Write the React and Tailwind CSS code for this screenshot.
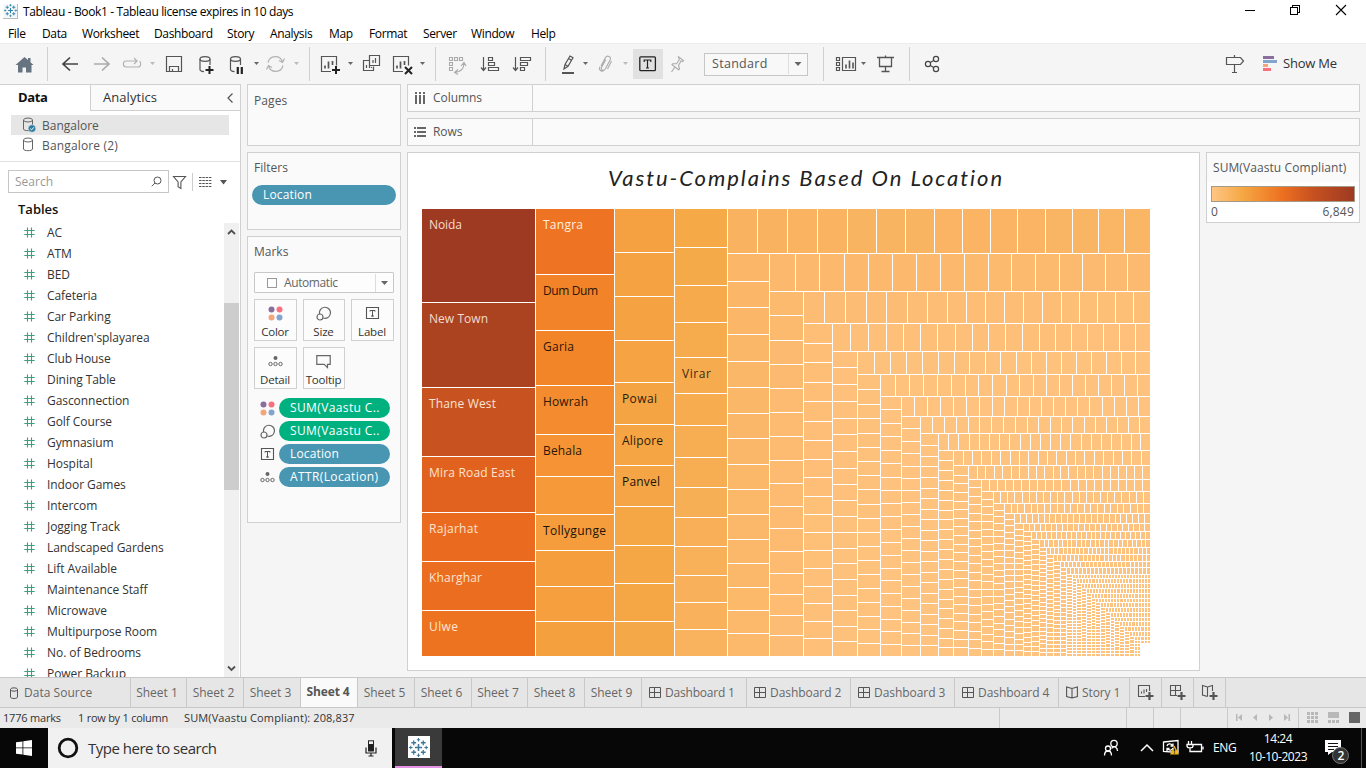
import React from "react";

/* ------------------------------------------------------------------ */
/* Treemap                                                             */
/* ------------------------------------------------------------------ */

const RIGHT = 1150;
const BOTTOM = 656;

// Strips are peeled off the remaining area in turn: "c" from the left edge, "r" from the top edge.
const STRIPS = [
  ["c", 535, [302, 387, 456, 512, 561, 610], ["#9e3a22", "#ab4321", "#c85320", "#e1621f", "#ea6b20", "#eb6d20", "#ee7321"]],
  ["c", 614, [274, 330, 385, 434, 476, 514, 550, 586, 621], ["#ee7423", "#f28328", "#f38529", "#f48b2f", "#f69435", "#f69939", "#f59d3c", "#f59e3d", "#f59f3e", "#f5a03e"]],
  ["c", 674, [252, 296, 340, 382, 424, 465, 506, 545, 583, 621], ["#f5a141", "#f5a847"]],
  ["c", 727, [247, 285, 322, 357, 393, 425, 457, 487, 517, 546, 575, 602, 629], ["#f5a947", "#f9b25e"]],
  ["r", 253, [757, 787, 817, 847, 876, 905, 934, 962, 990, 1017, 1045, 1072, 1098, 1124], ["#f9b360", "#fab565"]],
  ["c", 769, [281, 307, 334, 361, 387, 413, 438, 464, 489, 514, 539, 563, 587, 610, 633], ["#fbb667", "#fcb96b"]],
  ["r", 291, [795, 819, 844, 868, 892, 916, 940, 964, 988, 1011, 1035, 1059, 1082, 1105, 1127], ["#fcb96d", "#fcba70"]],
  ["c", 803, [315, 340, 364, 388, 412, 436, 460, 483, 506, 528, 551, 573, 594, 615, 635], ["#fcba6f", "#fdbc73"]],
  ["r", 323, [824, 845, 866, 886, 907, 927, 947, 966, 985, 1004, 1023, 1042, 1061, 1079, 1097, 1115, 1133], ["#fdbc73", "#fdbe76"]],
  ["c", 832, [343, 362, 382, 401, 421, 440, 459, 477, 496, 514, 532, 550, 568, 586, 603, 621, 638], ["#febe76", "#febf78"]],
  ["r", 351, [850, 868, 886, 903, 920, 937, 955, 972, 988, 1005, 1022, 1039, 1055, 1071, 1087, 1103, 1119, 1135], ["#febf78", "#fec07a"]],
  ["c", 857, [367, 384, 401, 418, 434, 451, 468, 484, 500, 516, 532, 548, 563, 579, 595, 610, 626, 641], ["#fec07a", "#fec17b"]],
  ["r", 374, [874, 890, 906, 922, 938, 954, 969, 985, 1000, 1016, 1031, 1046, 1061, 1076, 1091, 1106, 1121, 1135], ["#fec17b", "#fec27c"]],
  ["c", 880, [389, 404, 418, 433, 447, 461, 475, 489, 504, 518, 532, 546, 560, 574, 588, 602, 616, 629, 643], ["#fec17c", "#fec27d"]],
  ["r", 396, [895, 909, 923, 937, 951, 965, 978, 992, 1006, 1019, 1033, 1046, 1059, 1072, 1085, 1098, 1111, 1124, 1137], ["#ffc27d", "#ffc27e"]],
  ["c", 901, [409, 423, 436, 450, 463, 477, 490, 503, 516, 529, 542, 555, 568, 580, 593, 606, 619, 631, 644], ["#ffc27e", "#ffc37f"]],
  ["r", 416, [914, 927, 940, 953, 966, 979, 992, 1004, 1017, 1029, 1041, 1053, 1065, 1077, 1089, 1102, 1114, 1126, 1138], ["#ffc37f", "#ffc37f"]],
  ["c", 920, [428, 441, 453, 466, 478, 490, 502, 514, 526, 538, 550, 562, 574, 586, 598, 610, 622, 633, 645], ["#ffc37f", "#ffc380"]],
  ["r", 433, [932, 944, 956, 968, 979, 991, 1003, 1015, 1027, 1038, 1050, 1061, 1072, 1084, 1095, 1106, 1117, 1128, 1139]],
  ["c", 938, [445, 456, 466, 477, 488, 498, 509, 519, 530, 540, 551, 561, 572, 582, 593, 603, 614, 624, 635, 645]],
  ["r", 450, [948, 958, 969, 979, 989, 999, 1009, 1020, 1030, 1040, 1050, 1060, 1070, 1081, 1091, 1101, 1111, 1121, 1131, 1140]],
  ["c", 953, [460, 470, 480, 490, 500, 510, 519, 529, 539, 549, 559, 569, 579, 589, 599, 608, 618, 628, 638, 647]],
  ["r", 465, [963, 972, 981, 991, 1000, 1010, 1019, 1028, 1038, 1047, 1056, 1066, 1075, 1084, 1094, 1103, 1113, 1122, 1131, 1141]],
  ["c", 968, [475, 483, 492, 501, 509, 518, 526, 535, 544, 552, 561, 570, 578, 587, 596, 604, 613, 621, 630, 639, 647]],
  ["r", 479, [977, 985, 994, 1002, 1011, 1019, 1028, 1036, 1044, 1053, 1060, 1068, 1077, 1085, 1093, 1102, 1110, 1118, 1126, 1134, 1142]],
  ["c", 981, 8.5], ["r", 491, 8.1], ["c", 993, 7.5], ["r", 503, 7.2],
  ["c", 1004, 6.6], ["r", 513, 6.7], ["c", 1014, 6.1], ["r", 523, 6],
  ["c", 1023, 5.7], ["r", 531, 5.4], ["c", 1031, 4.7], ["r", 539, 4.9],
  ["c", 1039, 5], ["r", 547, 4.6], ["c", 1046, 4.1], ["r", 554, 4.1],
  ["c", 1053, 4], ["r", 561, 4.1], ["c", 1060, 4], ["r", 567, 4],
  ["c", 1066, 4], ["r", 574, 4], ["c", 1072, 3], ["r", 578, 3],
  ["c", 1076, 3], ["r", 583, 3], ["c", 1081, 3], ["r", 588, 3],
  ["c", 1086, 3], ["r", 593, 3], ["c", 1091, 3], ["r", 598, 3],
  ["c", 1095, 3], ["r", 602, 3], ["c", 1100, 3], ["r", 607, 3],
  ["c", 1105, 3], ["r", 612, 3], ["c", 1110, 3], ["r", 617, 3],
  ["c", 1114, 3], ["r", 621, 3], ["c", 1119, 3], ["r", 626, 3],
  ["c", 1124, 3], ["r", 631, 3], ["c", 1129, 3], ["r", 636, 3],
  ["c", 1134, 3], ["r", 640, 3], ["c", 1137, 3], ["r", 643, 3],
  ["c", 1140, 3],
];

const channel = (hex, i) => parseInt(hex.slice(1 + i * 2, 3 + i * 2), 16);
function mix(a, b, t) {
  const v = [0, 1, 2].map((i) => Math.round(channel(a, i) + (channel(b, i) - channel(a, i)) * t));
  return `rgb(${v.join(",")})`;
}

function buildCells() {
  const cells = [];
  let x = 422;
  let y = 209;
  for (const [axis, end, spec, colors = ["#ffc380", "#ffc380"]] of STRIPS) {
    const from = axis === "c" ? y : x;
    const to = axis === "c" ? BOTTOM : RIGHT;
    let cuts = spec;
    if (!Array.isArray(spec)) {
      const n = Math.max(1, Math.round((to - from) / spec));
      cuts = [];
      for (let k = 1; k < n; k++) cuts.push(Math.round(from - 1 + (k * (to - from + 1)) / n));
    }
    const stops = [...cuts, to];
    let start = from;
    stops.forEach((stop, i) => {
      const fill = colors.length === stops.length && colors.length > 2
        ? colors[i]
        : mix(colors[0], colors[1], i / Math.max(1, stops.length - 1));
      if (axis === "c") cells.push([x, start, end - x, stop - start, fill]);
      else cells.push([start, y, stop - start, end - y, fill]);
      start = stop + 1;
    });
    if (axis === "c") x = end + 1;
    else y = end + 1;
  }
  return cells;
}

const CELLS = buildCells();

const LABELS = [
  ["Noida", 429, 229, 33, "#f6dccf"], ["New Town", 429, 323, 59, "#f3dace"], ["Thane West", 429, 408, 67, "#fbe3d3"],
  ["Mira Road East", 429, 477, 86, "#fde3cf"], ["Rajarhat", 429, 533, 49, "#fde3cf"], ["Kharghar", 429, 582, 53, "#fde3cf"],
  ["Ulwe", 429, 631, 29, "#fde6cf"], ["Tangra", 543, 229, 40, "#fdeedd"], ["Dum Dum", 543, 295, 55, "#2b1606"],
  ["Garia", 543, 351, 31, "#2b1606"], ["Howrah", 543, 406, 45, "#2b1806"], ["Behala", 543, 455, 39, "#2b1806"],
  ["Tollygunge", 543, 535, 63, "#1d1307"], ["Powai", 622, 403, 35, "#2b1d0b"], ["Alipore", 622, 445, 41, "#2b1d0b"],
  ["Panvel", 622, 486, 38, "#1d1307"], ["Virar", 682, 378, 29, "#3b2a14"],
];

function Treemap() {
  return (
    <svg width="728" height="447" viewBox="422 209 728 447" className="block">
      <g shapeRendering="crispEdges">
        {CELLS.map(([x, y, w, h, fill], i) => (
          <rect key={i} x={x} y={y} width={w} height={h} fill={fill} />
        ))}
      </g>
      {LABELS.map(([t, x, y, w, fill]) => (
        <text key={t} x={x} y={y} textLength={w} fill={fill} fontSize="12" className="font-['Open_Sans',sans-serif]">{t}</text>
      ))}
    </svg>
  );
}

/* ------------------------------------------------------------------ */
/* Small shared drawings                                               */
/* ------------------------------------------------------------------ */

const Caret = ({ x, y = 62, c = "#666", w = 5 }) => (
  <path d={`M${x} ${y}h${w}l${-w / 2} ${w / 2 + 0.5}z`} fill={c} stroke="none" />
);

const Hash = () => (
  <svg width="11" height="11" viewBox="0 0 11 11" fill="none" stroke="#3c9f7d" strokeWidth="1.1" className="shrink-0">
    <path d="M3.5 .5v10M7.5 .5v10M.3 3.5h10.4M.3 7.5h10.4" />
  </svg>
);

const Cylinder = ({ checked }) => (
  <svg width="14" height="16" viewBox="0 0 14 16" fill="none" stroke="#666" className="shrink-0">
    <path d="M.5 3v9c0 2.2 9 2.2 9 0V3" />
    <ellipse cx="5" cy="3" rx="4.5" ry="2" />
    {checked && (
      <>
        <circle cx="9" cy="11.5" r="3.8" fill="#2e7d9f" stroke="#e6e6e6" strokeWidth=".6" />
        <path d="M7.2 11.6l1.4 1.3 2.3-2.6" stroke="#fff" />
      </>
    )}
  </svg>
);

const ColorDots = () => (
  <svg width="15" height="15" viewBox="0 0 15 15" className="shrink-0">
    <circle cx="3.5" cy="3.5" r="3" fill="#8a6f9e" /><circle cx="11.5" cy="3.5" r="3" fill="#f8707f" />
    <circle cx="3.5" cy="11.5" r="3" fill="#f4a57c" /><circle cx="11.5" cy="11.5" r="3" fill="#82a4cd" />
  </svg>
);
const SizeIcon = () => (
  <svg width="15" height="15" viewBox="0 0 15 15" fill="none" stroke="#666" strokeWidth="1.2" className="shrink-0">
    <path d="M3.6 8A5.5 5.5 0 1 1 7.3 12" /><circle cx="4" cy="11" r="3" />
  </svg>
);
const LabelIcon = () => (
  <svg width="15" height="15" viewBox="0 0 15 15" fill="none" stroke="#555" className="shrink-0">
    <path d="M1.500 1.500h12v11h-12z" strokeWidth="1.1" /><path d="M5 5.600V4.500h5v1.100M7.500 4.500v6M6 10h3" />
  </svg>
);
const DetailIcon = () => (
  <svg width="15" height="15" viewBox="0 0 15 15" fill="none" stroke="#666" className="shrink-0">
    <circle cx="7.5" cy="4" r="2" fill="#666" stroke="none" />
    <circle cx="2.5" cy="10" r="1.7" /><circle cx="7.5" cy="10" r="1.7" /><circle cx="12.5" cy="10" r="1.7" />
  </svg>
);
const TooltipIcon = () => (
  <svg width="15" height="15" viewBox="0 0 15 15" fill="none" stroke="#666" strokeWidth="1.2" className="shrink-0">
    <path d="M.8 1.6h13.4v8.8h-2.7v3.2L8.2 10.4H.8z" />
  </svg>
);

const TableauMark = ({ size, color }) => (
  <svg width={size} height={size} viewBox="0 0 16 16" fill="none" stroke={color} className="shrink-0">
    <path d="M8 5v6M5 8h6" strokeWidth="1.3" />
    <path d="M8 0v3M6.6 1.5h2.8M8 13v3M6.6 14.5h2.8M1.5 6.6v2.8M0 8h3M14.5 6.6v2.8M13 8h3" strokeWidth=".9" />
    <path d="M4 2v4M2 4h4M12 2v4M10 4h4M4 10v4M2 12h4M12 10v4M10 12h4" strokeWidth="1.1" />
  </svg>
);

/* ------------------------------------------------------------------ */
/* Title, menu and toolbar                                             */
/* ------------------------------------------------------------------ */

function TitleBar() {
  return (
    <div className="flex h-[22px] shrink-0 items-center bg-white">
      <div className="ml-[3px] flex h-[15px] w-[15px] items-center justify-center border-r border-b border-[#bbb] bg-[#f4f8fa]">
        <TableauMark size={13} color="#2f7fab" />
      </div>
      <span className="ml-[5px] mt-[2px] text-[12px] tracking-[-0.36px] text-black">Tableau - Book1 - Tableau license expires in 10 days</span>
      <svg width="130" height="22" viewBox="1236 0 130 22" fill="none" stroke="#000" className="ml-auto">
        <path d="M1245 10.5h10M1290.5 7.5h7v7h-7zM1292.500 7.500v-2h7v7h-2" shapeRendering="crispEdges" />
        <path d="M1336 5l10 10M1346 5l-10 10" strokeWidth="1.1" />
      </svg>
    </div>
  );
}

const MENU = [
  ["File", "w-[34px]"], ["Data", "w-[40px]"], ["Worksheet", "w-[72px]"], ["Dashboard", "w-[73px]"], ["Story", "w-[43px]"],
  ["Analysis", "w-[59px]"], ["Map", "w-[40px]"], ["Format", "w-[54px]"], ["Server", "w-[48px]"], ["Window", "w-[60px]"], ["Help", "w-[40px]"],
];

function MenuBar() {
  return (
    <div className="flex h-[21px] shrink-0 items-center bg-white pl-[8px] text-[12px] tracking-[-0.36px] text-black">
      {MENU.map(([m, w]) => <span key={m} className={`${w} mt-[3px] shrink-0`}>{m}</span>)}
    </div>
  );
}

// Toolbar slots sit side by side; each one is drawn in window coordinates between its two x bounds.
const Slot = ({ a, b, c = "#555", children }) => (
  <svg width={b - a} height="40" viewBox={`${a} 44 ${b - a} 40`} fill="none" stroke={c} strokeWidth="1.2" className="shrink-0">{children}</svg>
);
const Sep = () => <div className="h-[34px] w-px shrink-0 bg-[#d0d0d0]" />;

const ChartBox = ({ x, y }) => (
  <>
    <path d={`M${x + 10} ${y + 15.5}H${x + 0.5}V${y + 0.5}h15v9`} />
    <path d={`M${x + 4} ${y + 12.500}v-3M${x + 7.500} ${y + 12.500}v-7M${x + 11.500} ${y + 9}v-4`} strokeWidth="1.7" />
  </>
);
const DataCyl = ({ x }) => (
  <>
    <ellipse cx={x + 5} cy="59" rx="5" ry="2.3" />
    <path d={`M${x} 59v10.500c0 1 2 2 4 2.200M${x + 10} 59v6`} />
  </>
);

function Toolbar() {
  return (
    <div className="flex h-[41px] shrink-0 items-center border-t border-[#ececec] bg-[#f5f5f5]">
      <Slot a={0} b={47}>
        <path d="M15.500 65L24.500 57l3.500 3v-2h2.500v4.300L33.500 65h-2v7.500h-5.500v-5h-3.500v5h-4.500V65z" fill="#667380" stroke="none" />
      </Slot>
      <Sep />
      <Slot a={48} b={88} c="#444"><path d="M78 64H63M70 57.500L63 64l7 6.500" strokeWidth="1.7" /></Slot>
      <Slot a={88} b={117} c="#aaa"><path d="M94 64h15M102 57.500l7 6.500-7 6.500" strokeWidth="1.7" /></Slot>
      <Slot a={117} b={160} c="#b2b2b2">
        <path d="M137 61h-11c-3.500 0-3.500 6 0 6h12c3 0 3.500-4.500 1.500-5.700M134 58l3 3-3 3" /><Caret x={150} c="#bbb" />
      </Slot>
      <Slot a={160} b={190}><path d="M166.500 56.500h15v15h-15zM169.500 71v-4.500h9V71M172.500 71v-2" /></Slot>
      <Slot a={190} b={222}><DataCyl x={200} /><path d="M209.500 66v8M205.500 70h8" strokeWidth="2" stroke="#222" /></Slot>
      <Slot a={222} b={263}><DataCyl x={230.500} /><path d="M237.800 67v7M241.800 67v7" strokeWidth="2.2" stroke="#222" /><Caret x={254} /></Slot>
      <Slot a={263} b={309} c="#b2b2b2">
        <path d="M268 62.500a7.500 7.500 0 0 1 14.500-.5M283 65.500a7.500 7.500 0 0 1-14.500.5M284.500 58.500l-2 4-3.500-2M266.500 69.500l2-4 3.500 2" /><Caret x={294} c="#bbb" />
      </Slot>
      <Sep />
      <Slot a={310} b={358}><ChartBox x={321} y={56} /><path d="M336 66v8M332 70h8" strokeWidth="2" stroke="#222" /><Caret x={348} /></Slot>
      <Slot a={358} b={388}>
        <path d="M369.500 55.500h10v10h-10zM373 63v-3M375.500 63v-5M369 60.500h-5.500v10h10v-4M366.500 68v-3M369.500 68v-2M371.500 68v-1" />
      </Slot>
      <Slot a={388} b={435}><ChartBox x={393} y={56} /><path d="M405 67l7 7M412 67l-7 7" strokeWidth="2" stroke="#222" /><Caret x={420} /></Slot>
      <Sep />
      <Slot a={436} b={474} c="#aaa">
        <path d="M449.500 57.500h3v3h-3zM454.500 57.500h3v3h-3zM459.500 57.500h3v3h-3zM449.500 62.500h3v3h-3zM449.500 67.500h3v3h-3zM464 63c0 6-3 9-9 9.500M461 66l3-3.500 2 3.500M458 69.500l-3.500 3 3.500 2" strokeWidth="1.1" />
      </Slot>
      <Slot a={474} b={506}><path d="M483.500 57v13M481 67.500l2.500 3 2.500-3M488.500 57.500h4v3h-4zM488.500 62.500h6v3h-6zM488.500 67.500h10v3h-10z" /></Slot>
      <Slot a={506} b={545}><path d="M515.500 57v13M513 67.500l2.500 3 2.500-3M520.500 57.500h10v3h-10zM520.500 62.500h7v3h-7zM520.500 67.500h4v3h-4z" /></Slot>
      <Sep />
      <Slot a={546} b={594}>
        <path d="M564 69l1-4.500 5-8.500 3 1.800-5 8.500zM565 64.500l3 1.800M568.500 58.500l3 1.800" /><path d="M562 73h12" strokeWidth="2" /><Caret x={583} />
      </Slot>
      <Slot a={594} b={633} c="#aaa">
        <path d="M601 66l4.500-8.500c1.500-2.500 6-1 4.800 2l-5 9.500c-1.500 2.500-5 1-3.800-1.500l4.300-8M603.500 71c-3 .5-5-1.500-3.500-4.500M611.500 61l-4 8" strokeWidth="1.1" /><Caret x={623} c="#bbb" />
      </Slot>
      <div className="flex h-[30px] w-[30px] shrink-0 items-center justify-center bg-[#e1e1e1]">
        <svg width="18" height="16" viewBox="0 0 18 16" fill="none" stroke="#222" strokeWidth="1.3">
          <rect x=".8" y=".8" width="15.600" height="13.900" rx="1" /><path d="M5.200 6V4h6.600v2M8.500 4v8M7 12h3" strokeWidth="1.2" />
        </svg>
      </div>
      <Slot a={663} b={704} c="#aaa"><path d="M678 56.500l5.500 4-1 1-1.500-.5-2.500 4.500 1 3.500-1 .7-6.500-5 .8-1h3.700l2.800-4-.3-1.700zM675 67l-3.500 5" strokeWidth="1.1" /></Slot>
      <div className="flex h-[23px] w-[104px] shrink-0 items-center border border-[#c6c6c6] bg-[#f8f8f8] text-[#555]">
        <span className="w-[84px] border-r border-[#ddd] pl-[7px] text-[12.500px] leading-[20px] tracking-[0.3px]">Standard</span>
        <svg width="18" height="8" viewBox="0 0 18 8"><path d="M5.500 2h7L9 6z" fill="#666" /></svg>
      </div>
      <div className="w-[15px] shrink-0" />
      <Sep />
      <Slot a={824} b={870}>
        <path d="M842.500 57.500h13v13h-13zM836.500 57.500h3v3h-3zM836.500 62.500h3v3h-3zM836.500 67.500h3v3h-3z" />
        <path d="M846 68.500v-4M849.500 68.500v-8M853 68.500v-6" strokeWidth="1.6" /><Caret x={861} />
      </Slot>
      <Slot a={870} b={909}><path d="M877 57.500h17M879.500 58v8.500h12V58M885.500 66.500v5M881.500 71.500h8M885.500 55.500v2" strokeWidth="1.3" /></Slot>
      <Sep />
      <Slot a={910} b={960} c="#444">
        <circle cx="928" cy="64" r="2.600" /><circle cx="936" cy="59" r="2.600" /><circle cx="936" cy="69" r="2.600" /><path d="M930.300 62.500l3.400-2M930.300 65.500l3.400 2" />
      </Slot>
      <div className="flex-1" />
      <Slot a={1216} b={1253}><path d="M1226.500 57.500h14l3 3.500-3 3.500h-14zM1234.500 55v2.500M1234.500 64.500v7.500M1232 72.500h5" /></Slot>
      <Slot a={1253} b={1283}>
        <g stroke="none"><path d="M1263 56h11v3h-11z" fill="#8a6f9e" /><path d="M1263 60h14v3h-14z" fill="#82a4cd" /><path d="M1263 64h5v3h-5z" fill="#f4a57c" /><path d="M1263 68h8v3h-8z" fill="#f8707f" /></g>
      </Slot>
      <span className="w-[83px] text-[13px] tracking-[-0.2px] text-[#333]">Show Me</span>
    </div>
  );
}

/* ------------------------------------------------------------------ */
/* Data pane                                                           */
/* ------------------------------------------------------------------ */

const FIELDS = [
  "AC", "ATM", "BED", "Cafeteria", "Car Parking", "Children'splayarea", "Club House", "Dining Table", "Gasconnection",
  "Golf Course", "Gymnasium", "Hospital", "Indoor Games", "Intercom", "Jogging Track", "Landscaped Gardens",
  "Lift Available", "Maintenance Staff", "Microwave", "Multipurpose Room", "No. of Bedrooms", "Power Backup",
];

function DataPane() {
  return (
    <div className="flex h-full w-[241px] shrink-0 flex-col border-t border-r border-[#d0d0d0] bg-white">
      <div className="flex h-[26px] shrink-0">
        <div className="w-[90px] pl-[18px] text-[13px] leading-[25px] font-bold tracking-[-0.35px] text-[#111]">Data</div>
        <div className="flex flex-1 items-center border-b border-l border-[#d0d0d0] bg-[#fafafa] pl-[12px] text-[13px] tracking-[0.05px] text-[#333]">
          Analytics
          <svg width="8" height="12" viewBox="0 0 8 12" fill="none" stroke="#555" strokeWidth="1.2" className="mr-[6px] ml-auto"><path d="M6.500 1.500L2 6l4.500 4.500" /></svg>
        </div>
      </div>
      <div className="h-[51px] shrink-0 border-b border-[#e2e2e2] pt-[4px] pl-[11px] text-[12px] tracking-[0px] text-[#555]">
        <div className="flex h-[20px] w-[218px] items-center bg-[#e6e6e6] pl-[12px]"><Cylinder checked /><span className="mt-px ml-[5px]">Bangalore</span></div>
        <div className="flex h-[20px] w-[218px] items-center pl-[12px]"><Cylinder /><span className="mt-px ml-[5px] tracking-[0.15px]">Bangalore (2)</span></div>
      </div>
      <div className="flex h-[39px] shrink-0 items-center pl-[8px]">
        <div className="flex h-[23px] w-[161px] items-center border border-[#c6c6c6] pl-[6px] text-[12px] text-[#999]">
          Search
          <svg width="11" height="11" viewBox="0 0 11 11" fill="none" stroke="#555" className="mr-[6px] ml-auto"><circle cx="6.500" cy="4.500" r="3.500" /><path d="M4 7L.8 10.300" /></svg>
        </div>
        <svg width="62" height="20" viewBox="169 171 62 20" fill="none" stroke="#555" strokeWidth="1.100">
          <path d="M173.500 175.500h12l-4.600 5.500v6.500l-2.800-1.800V181z" /><path d="M192.500 172v18" stroke="#ccc" />
          <path d="M199 176.500h12.500M199 179.500h12.500M199 182.500h12.500M199 185.500h12.500" strokeDasharray="2.500 .8" strokeWidth="1.100" />
          <path d="M220 179h7l-3.500 4.500z" fill="#555" stroke="none" />
        </svg>
      </div>
      <div className="h-[21px] shrink-0 pl-[18px] text-[13px] leading-[17px] font-semibold tracking-[0px] text-[#111]">Tables</div>
      <div className="flex min-h-0 flex-1">
        <div className="w-[224px] overflow-hidden text-[12px] tracking-[-0.06px] text-[#333]">
          {FIELDS.map((f) => <div key={f} className="flex h-[21px] items-center pl-[24px]"><Hash /><span className="mt-px ml-[12px] whitespace-nowrap">{f}</span></div>)}
        </div>
        <div className="mt-px flex w-[15px] flex-col items-center bg-[#f0f0f0]">
          <svg width="15" height="17" viewBox="0 0 15 17" fill="none" stroke="#505050" strokeWidth="1.800"><path d="M4 11l3.500-3.500L11 11" /></svg>
          <div className="mt-[63px] h-[187px] w-[15px] bg-[#cdcdcd]" />
          <svg width="15" height="17" viewBox="0 0 15 17" fill="none" stroke="#505050" strokeWidth="1.800" className="mt-auto"><path d="M4 6.500L7.500 10 11 6.500" /></svg>
        </div>
      </div>
    </div>
  );
}

/* ------------------------------------------------------------------ */
/* Cards                                                               */
/* ------------------------------------------------------------------ */

const MARK_BUTTONS = [["Color", ColorDots], ["Size", SizeIcon], ["Label", LabelIcon], ["Detail", DetailIcon], ["Tooltip", TooltipIcon]];
const MARK_PILLS = [
  ["SUM(Vaastu C..", "bg-[#00b180]", ColorDots], ["SUM(Vaastu C..", "bg-[#00b180]", SizeIcon],
  ["Location", "bg-[#4996b2]", LabelIcon], ["ATTR(Location)", "bg-[#4996b2]", DetailIcon],
];

function Cards() {
  return (
    <div className="ml-[6px] flex w-[154px] shrink-0 flex-col gap-[6px] text-[12px] text-[#555]">
      <div className="h-[62px] border border-[#d0d0d0] bg-[#fafafa] pt-[6px] pl-[6px] leading-[19px] tracking-[0.1px]">Pages</div>
      <div className="h-[78px] border border-[#d0d0d0] bg-[#fafafa] pt-[6px] pl-[4px] leading-[18px]">
        <div className="pl-[2px]">Filters</div>
        <div className="mt-[8px] h-[20px] w-[144px] rounded-full bg-[#4996b2] pl-[11px] leading-[20px] font-medium tracking-[0.15px] text-white">Location</div>
      </div>
      <div className="h-[287px] border border-[#d0d0d0] bg-[#fafafa] pt-[6px] pl-[6px] leading-[18px]">
        <div>Marks</div>
        <div className="mt-[11px] flex h-[21px] w-[140px] items-center rounded-[1px] border border-[#c8c8c8] bg-[#fdfdfd]">
          <div className="ml-[12px] h-[10px] w-[10px] border border-[#999]" />
          <span className="ml-[7px] w-[92px] border-r border-[#ddd] tracking-[-0.4px] text-[#666]">Automatic</span>
          <svg width="17" height="8" viewBox="0 0 17 8"><path d="M5 2h7L8.500 6z" fill="#666" /></svg>
        </div>
        <div className="mt-[6px] grid w-[140px] grid-cols-[43px_42px_43px] gap-[6px] text-[11.500px] tracking-[-0.2px] text-[#333]">
          {MARK_BUTTONS.map(([t, I]) => (
            <div key={t} className="flex h-[42px] flex-col items-center border border-[#d0d0d0] bg-[#fcfcfc] pt-[6px] pr-px whitespace-nowrap"><I /><span className="mt-[2px]">{t}</span></div>
          ))}
        </div>
        <div className="mt-[9px] flex flex-col gap-[3px] pl-[6px]">
          {MARK_PILLS.map(([t, bg, I], i) => (
            <div key={i} className="flex h-[20px] items-center"><I /><span className={`${bg} ml-[4px] h-[20px] w-[111px] rounded-full pl-[11px] leading-[19px] font-medium whitespace-nowrap text-white ${t === "Location" ? "tracking-[0.15px]" : "tracking-[0.38px]"}`}>{t}</span></div>
          ))}
        </div>
      </div>
    </div>
  );
}

const Shelf = ({ label, children }) => (
  <div className="flex h-[28px] w-[953px] items-center border border-[#d0d0d0] bg-[#fafafa] text-[12px] text-[#555]">
    <svg width="12" height="12" viewBox="0 0 12 12" fill="#666" className="ml-[6px]">{children}</svg>
    <span className="ml-[7px] w-[99px] leading-[26px] tracking-[-0.05px]">{label}</span>
    <div className="h-full w-px bg-[#d0d0d0]" />
  </div>
);

function Workspace() {
  return (
    <div className="ml-[6px] flex flex-1 flex-col gap-[6px]">
      <Shelf label="Columns"><path d="M1 0h2v2H1zM5 0h2v2H5zM9 0h2v2H9zM1 3h2v9H1zM5 3h2v9H5zM9 3h2v9H9z" /></Shelf>
      <Shelf label="Rows"><path d="M0 1h2v2H0zM0 5h2v2H0zM0 9h2v2H0zM3 1h9v2H3zM3 5h9v2H3zM3 9h9v2H3z" /></Shelf>
      <div className="flex gap-[6px]">
        <div className="h-[519px] w-[793px] border border-[#d0d0d0] bg-white">
          <div className="h-[56px] pt-[11px] pl-[200px] font-['Lato',cursive] text-[22px] leading-[28px] font-normal whitespace-nowrap tracking-[1.950px] text-[#222] italic">Vastu-Complains Based On Location</div>
          <div className="pl-[14px]"><Treemap /></div>
        </div>
        <div className="h-[71px] w-[154px] border border-[#d0d0d0] bg-white text-[12px] text-[#555]">
          <div className="h-[29px] bg-[#fafafa] pl-[6px] leading-[30px] whitespace-nowrap tracking-[0.080px]">SUM(Vaastu Compliant)</div>
          <div className="mt-[4px] ml-[4px] h-[16px] w-[144px] border border-[#a49a88] bg-[linear-gradient(to_right,#ffc685,#f5a742_22%,#ed6f20_50%,#c55020_72%,#9e3a22)]" />
          <div className="flex justify-between pr-[5px] pl-[4px] leading-[19px]"><span>0</span><span className="tracking-[0.2px]">6,849</span></div>
        </div>
      </div>
    </div>
  );
}

/* ------------------------------------------------------------------ */
/* Bottom bars                                                         */
/* ------------------------------------------------------------------ */

const SHEETS = [
  ["Sheet 1", "w-[56px]"], ["Sheet 2", "w-[57px]"], ["Sheet 3", "w-[57px]"], ["Sheet 4", "w-[57px]"], ["Sheet 5", "w-[57px]"],
  ["Sheet 6", "w-[57px]"], ["Sheet 7", "w-[56px]"], ["Sheet 8", "w-[57px]"], ["Sheet 9", "w-[57px]"],
];

const GridIcon = () => <svg width="12" height="12" viewBox="0 0 12 12" fill="none" stroke="#555" strokeWidth="1"><path d="M.5 .5h11v10h-11zM5.500 .5v10M.5 5.500h11" /></svg>;
const BookIcon = () => <svg width="12" height="13" viewBox="0 0 12 13" fill="none" stroke="#555" strokeWidth="1.100"><path d="M6 2.500L.6 1v9.500L6 12l5.400-1.500V1zM6 2.500V12" /></svg>;

const NewTab = ({ children }) => (
  <div className="flex w-[32px] items-center justify-center border-r border-[#c8c8c8]">
    <svg width="18" height="17" viewBox="0 0 18 17" fill="none" stroke="#555" strokeWidth="1.100">{children}<path d="M12.500 8v8M8.500 12h8" strokeWidth="2.200" /></svg>
  </div>
);

function SheetTabs() {
  return (
    <div className="flex h-[31px] shrink-0 border-y border-[#c8c8c8] bg-[#e6e6e6] text-[12px] text-[#666]">
      <div className="flex w-[131px] items-center border-r border-[#c8c8c8] pl-[10px]">
        <svg width="8" height="12" viewBox="0 0 8 12" fill="none" stroke="#555"><path d="M.5 2.500v7.500c0 2 7 2 7 0V2.500" /><ellipse cx="4" cy="2.500" rx="3.500" ry="1.700" /></svg>
        <span className="ml-[6px] tracking-[0.02px]">Data Source</span>
      </div>
      {SHEETS.map(([s, w]) => (
        <div key={s} className={`${w} flex shrink-0 items-center justify-center border-r border-[#c8c8c8] whitespace-nowrap ${s === "Sheet 4" ? "bg-[#fafafa] pr-[2px] pb-[2px] font-bold tracking-[-0.1px] text-[#555]" : "pr-[3px] tracking-[0px]"}`}>{s}</div>
      ))}
      {[1, 2, 3, 4].map((n) => (
        <div key={n} className={`${n === 1 ? "w-[105px]" : "w-[104px]"} flex shrink-0 items-center border-r border-[#c8c8c8] pl-[7px] whitespace-nowrap`}><GridIcon /><span className={`ml-[4px] ${n === 1 ? "tracking-[-0.2px]" : "tracking-[-0.05px]"}`}>Dashboard {n}</span></div>
      ))}
      <div className="flex w-[71px] items-center border-r border-[#c8c8c8] pl-[7px]"><BookIcon /><span className="ml-[4px] tracking-[-0.1px]">Story 1</span></div>
      <NewTab><path d="M8 12.500H1.500v-11h11V7M4.500 9.500v-2M7 9.500v-4M9.500 8V5" /></NewTab>
      <NewTab><path d="M8 11.500H1.500v-10h10V7M6.500 1.500v10M1.500 6.500h10" /></NewTab>
      <NewTab><path d="M6.500 3l-5-1.500v9.500l5 1.500M6.500 3v9.500M6.500 3l5-1.500V7" /></NewTab>
    </div>
  );
}

function StatusBar() {
  return (
    <div className="flex h-[20px] shrink-0 items-center bg-[#eaeaea] pl-[3px] text-[11px] text-[#333]">
      <span className="w-[75px] tracking-[-0.2px]">1776 marks</span>
      <span className="w-[106px] tracking-[-0.25px]">1 row by 1 column</span>
      <span className="tracking-[0.12px]">SUM(Vaastu Compliant): 208,837</span>
      <svg width="370" height="20" viewBox="996 708 370 20" className="ml-auto">
        <path d="M999.500 708v20M1126.500 708v20M1153.500 708v20M1180.500 708v20M1227.500 708v20M1298.500 708v20" stroke="#cacaca" />
        <g fill="#b8b8b8">
          <path d="M1236 714h1.500v7H1236zM1242 714v7l-4-3.500zM1257 714v7l-4-3.500zM1269 714v7l4-3.500zM1284 714v7l4-3.500zM1288.500 714h1.500v7h-1.500z" />
          {[712, 716, 720].map((y) => [1307, 1311, 1315].map((x) => <rect key={`${x}-${y}`} x={x} y={y} width="3" height="3" />))}
          <path d="M1328 712h11v6h-11zM1328 720h3v3h-3zM1332 720h3v3h-3zM1336 720h3v3h-3z" />
        </g>
        <path d="M1349 712h11v11h-11z" fill="#666" />
      </svg>
    </div>
  );
}

function Taskbar() {
  return (
    <div className="flex h-[40px] shrink-0 items-center bg-[#070707] text-white">
      <div className="flex w-[48px] justify-center">
        <svg width="16" height="16" viewBox="0 0 16 16" fill="#fff"><path d="M0 2.300L6.500 1.400v6.100H0zM7.300 1.300L16 0v7.500H7.300zM0 8.300h6.500v6.300L0 13.700zM7.300 8.300H16V16l-8.700-1.300z" /></svg>
      </div>
      <div className="flex h-[40px] w-[344px] items-center bg-[#f1f1f1] pl-[9px] text-[15px] text-[#333]">
        <svg width="22" height="22" viewBox="0 0 22 22" fill="none"><circle cx="11" cy="11" r="8.800" stroke="#111" strokeWidth="2.800" /></svg>
        <span className="ml-[9px] tracking-[-0.5px]">Type here to search</span>
        <svg width="12" height="17" viewBox="0 0 12 17" fill="none" stroke="#222" className="mr-[15px] ml-auto"><rect x="3.500" y=".8" width="5" height="10" /><path d="M3.500 4.500h5v6.300h-5z" fill="#222" /><path d="M1 7.500V13h10V7.500M6 13v3M3.500 16h5" strokeWidth="1.200" /></svg>
      </div>
      <div className="ml-[3px] flex h-[40px] w-[47px] flex-col items-center border-b-2 border-[#e693e8] bg-[#3a3a3a]">
        <div className="mt-[8px] flex h-[22px] w-[22px] items-center justify-center bg-white"><TableauMark size={19} color="#3f7797" /></div>
      </div>
      <svg width="112" height="40" viewBox="1100 728 112 40" fill="none" stroke="#fff" strokeWidth="1.300" className="ml-auto">
        <circle cx="1114" cy="743.500" r="3.200" /><circle cx="1108" cy="748.500" r="2.500" /><path d="M1104.500 755.500c0-6 7-6 7 0M1111.500 748.500c2.500-3 6-1.500 6 2.500" />
        <path d="M1141 751l6-6 6 6" strokeWidth="1.500" />
        <path d="M1163.500 742l14.500-1.500v12l-14.500-1z" /><path d="M1167 746c.5-2.500 4-3 5.500-.5M1173 743.500v2.500h-2.500M1173 748c-.5 2.500-4 3-5.500.5M1167 751v-2.500h2.500" />
        <path d="M1174.500 745.500l4.500 9h-9z" fill="#f5b81c" stroke="none" /><path d="M1174.500 748.500v3M1174.500 752.500v1" stroke="#222" />
        <path d="M1192.500 744.500h9v7h-10.500M1203 746.500v3M1188.500 741v3M1191.500 741v3M1187 744.500h6v1.500c0 2.500-6 2.500-6 0zM1190 748v3.500h2" />
      </svg>
      <span className="w-[34px] pl-px text-[12px] tracking-[-0.3px]">ENG</span>
      <div className="w-[64px] text-center text-[12px] leading-[18px] whitespace-nowrap tracking-[-0.450px]"><div>14:24</div><div>10-10-2023</div></div>
      <svg width="56" height="40" viewBox="1310 728 56 40">
        <path d="M1325 740h16v12h-9l-4 3v-3h-3z" fill="#fff" /><path d="M1328 743.500h10M1328 746.500h10M1328 749.500h6" stroke="#111" />
        <circle cx="1340.500" cy="755.500" r="8" fill="#333" stroke="#777" /><text x="1337.500" y="760" fill="#fff" fontSize="12" className="font-['Open_Sans',sans-serif] font-semibold">2</text>
        <path d="M1361.500 728v40" stroke="#555" />
      </svg>
    </div>
  );
}

export default function App() {
  return (
    <div className="flex h-[768px] w-[1366px] flex-col overflow-hidden bg-[#f5f5f5] font-['Open_Sans',sans-serif]">
      <TitleBar />
      <MenuBar />
      <Toolbar />
      <div className="flex h-[593px] shrink-0">
        <DataPane />
        <Cards />
        <Workspace />
      </div>
      <SheetTabs />
      <StatusBar />
      <Taskbar />
    </div>
  );
}
